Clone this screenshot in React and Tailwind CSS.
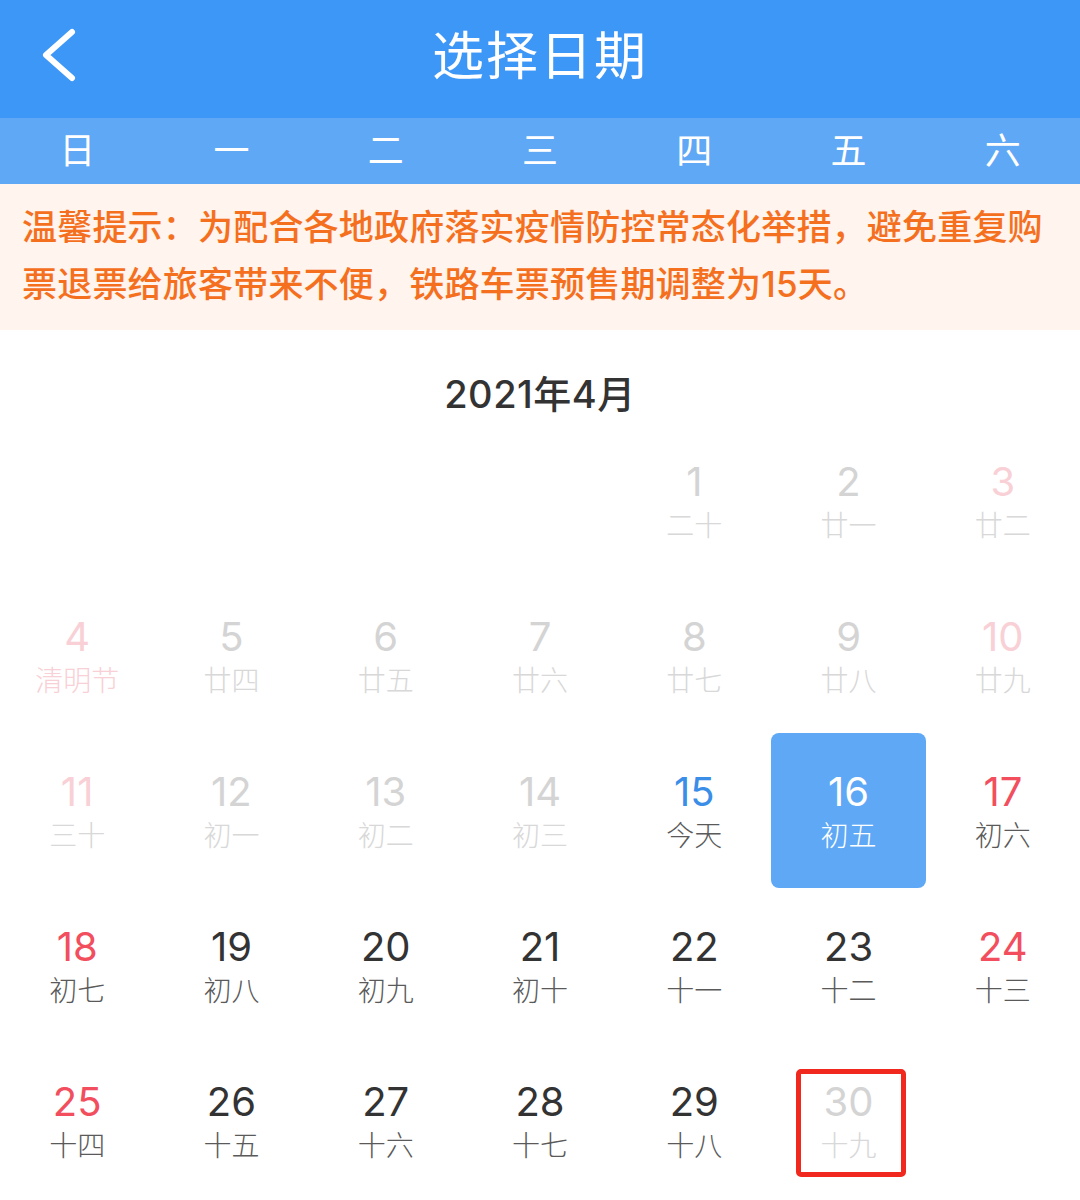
import React from "react";

const FONT = { fontFamily: 'Inter, "Noto Sans CJK SC", sans-serif' };

const weekdays = ["日", "一", "二", "三", "四", "五", "六"];

const rows = [
  [null, null, null, null, ["1", "二十", "d"], ["2", "廿一", "d"], ["3", "廿二", "dr"]],
  [["4", "清明节", "drl"], ["5", "廿四", "d"], ["6", "廿五", "d"], ["7", "廿六", "d"], ["8", "廿七", "d"], ["9", "廿八", "d"], ["10", "廿九", "dr"]],
  [["11", "三十", "dr"], ["12", "初一", "d"], ["13", "初二", "d"], ["14", "初三", "d"], ["15", "今天", "t"], ["16", "初五", "s"], ["17", "初六", "r"]],
  [["18", "初七", "r"], ["19", "初八", "n"], ["20", "初九", "n"], ["21", "初十", "n"], ["22", "十一", "n"], ["23", "十二", "n"], ["24", "十三", "r"]],
  [["25", "十四", "r"], ["26", "十五", "n"], ["27", "十六", "n"], ["28", "十七", "n"], ["29", "十八", "n"], ["30", "十九", "dbox"], null],
];

function Cell({ c }) {
  if (!c) return <div className="h-[155px]" />;
  const [num, lunar, type] = c;
  let numCls = "text-[#333333]";
  let lunCls = "text-[#5a5a5a]";
  let wrap = "";
  if (type === "d" || type === "dbox") {
    numCls = "text-[#d4d4d4]";
    lunCls = "text-[#d8d8d8]";
  } else if (type === "dr") {
    numCls = "text-[#f8d0d5]";
    lunCls = "text-[#d8d8d8]";
  } else if (type === "drl") {
    numCls = "text-[#f8d0d5]";
    lunCls = "text-[#f8d0d5]";
  } else if (type === "r") {
    numCls = "text-[#f24e5e]";
  } else if (type === "t") {
    numCls = "text-[#3a8ee8]";
  } else if (type === "s") {
    numCls = "text-white";
    lunCls = "text-white";
    wrap = "bg-[#5ea8f6] rounded-[8px]";
  }
  return (
    <div className={`relative h-[155px] flex flex-col items-center justify-center pt-[7px] ${wrap}`}>
      <div className={`text-[40px] leading-[44px] ${numCls}`}>{num}</div>
      <div className={`text-[28px] leading-[44px] font-light ${lunCls}`}>{lunar}</div>
      {type === "dbox" && (
        <div className="absolute left-[25px] top-[26px] w-[110px] h-[108px] border-[5px] border-[#f0281e] rounded-[5px]" />
      )}
    </div>
  );
}

export default function App() {
  return (
    <div className="w-[1080px] h-[1200px] bg-white overflow-hidden" style={FONT}>
      <div className="relative h-[118px] bg-[#3d97f7] flex items-center justify-center">
        <svg className="absolute left-[36px] top-[27px]" width="44" height="56" viewBox="0 0 44 56">
          <polyline points="36,5 10,28 36,51" fill="none" stroke="white" strokeWidth="6" strokeLinecap="round" strokeLinejoin="round" />
        </svg>
        <div className="text-white text-[52px] leading-none tracking-[2px] -mt-1">选择日期</div>
      </div>
      <div className="h-[66px] bg-[#5fa8f6] grid grid-cols-7 items-center">
        {weekdays.map((w) => (
          <div key={w} className="text-center text-white text-[36px] leading-none">
            {w}
          </div>
        ))}
      </div>
      <div className="h-[146px] bg-[#fff4ee] px-[22px] pt-[15px]">
        <p className="text-[#f5701e] text-[35px] leading-[57px] font-medium tracking-[0.2px]">
          温馨提示：为配合各地政府落实疫情防控常态化举措，避免重复购票退票给旅客带来不便，铁路车票预售期调整为15天。
        </p>
      </div>
      <div className="h-[93px] flex items-end justify-center pb-[10px]">
        <div className="text-[#333333] text-[38px] leading-none font-medium tracking-[0.5px]">2021年4月</div>
      </div>
      <div className="grid grid-cols-7">
        {rows.flat().map((c, i) => (
          <Cell key={i} c={c} />
        ))}
      </div>
    </div>
  );
}
